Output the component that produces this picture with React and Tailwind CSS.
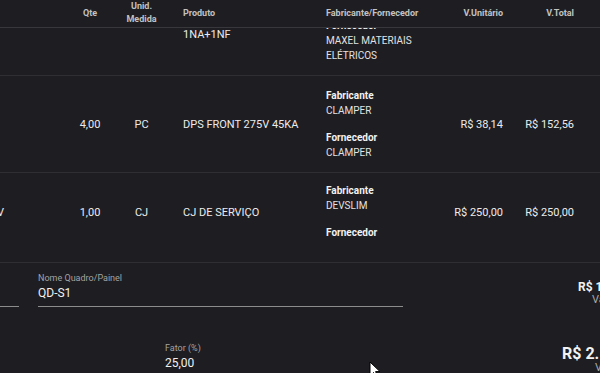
const cols = "grid grid-cols-[60px_60px_43px_163px_114px_63px_71px_26px]";

const Supplier = ({ label, lines }) => (
  <div>
    <p className="font-bold text-[10px] leading-[15px] text-[#f2f2f2]">{label}</p>
    {lines.map((l) => (
      <p key={l} className="text-[10px] leading-[15px] text-[#e2e2e2]">{l}</p>
    ))}
  </div>
);

const App = () => {
  return (
    <div
      className="relative w-[600px] h-[373px] overflow-hidden bg-[#1e1d21] text-[#ececec]"
      style={{ fontFamily: "Roboto, 'Liberation Sans', sans-serif" }}
    >
      {/* cabeçalho */}
      <div className={`${cols} h-[28px] pb-[8px] items-center border-b border-[#38373b] text-[9px] leading-[13px] font-bold text-[#c2c2c2]`}>
        <div />
        <div className="text-center">Qte</div>
        <div className="text-center">Unid.<br />Medida</div>
        <div className="pl-[20px]">Produto</div>
        <div>Fabricante/Fornecedor</div>
        <div className="text-right">V.Unitário</div>
        <div className="text-right">V.Total</div>
        <div />
      </div>

      {/* linhas */}
      <div className="overflow-hidden text-[11px] leading-[15px]">
        <div className={`${cols} -mt-[16px] border-b border-[#2f2e32]`}>
          <div />
          <div />
          <div />
          <div className="pl-[20px] pt-[15px]">1NA+1NF</div>
          <div className="pt-[6px] pb-[12px]">
            <Supplier label="Fornecedor" lines={["MAXEL MATERIAIS", "ELÉTRICOS"]} />
          </div>
          <div />
          <div />
          <div />
        </div>

        <div className={`${cols} items-center border-b border-[#2f2e32]`}>
          <div />
          <div className="text-center">4,00</div>
          <div className="text-center">PC</div>
          <div className="pl-[20px]">DPS FRONT 275V 45KA</div>
          <div className="pt-[12px] pb-[12px]">
            <Supplier label="Fabricante" lines={["CLAMPER"]} />
            <div className="mt-[12px]">
              <Supplier label="Fornecedor" lines={["CLAMPER"]} />
            </div>
          </div>
          <div className="text-right">R$ 38,14</div>
          <div className="text-right">R$ 152,56</div>
          <div />
        </div>

        <div className={`${cols} items-center border-b border-[#2f2e32]`}>
          <div className="pb-[11px] flex justify-start">
            <span className="-ml-[3px] whitespace-nowrap">V</span>
          </div>
          <div className="text-center pb-[11px]">1,00</div>
          <div className="text-center pb-[11px]">CJ</div>
          <div className="pl-[20px] pb-[11px]">CJ DE SERVIÇO</div>
          <div className="pt-[10px] pb-[22px]">
            <Supplier label="Fabricante" lines={["DEVSLIM"]} />
            <div className="mt-[12px]">
              <Supplier label="Fornecedor" lines={[]} />
            </div>
          </div>
          <div className="text-right pb-[11px]">R$ 250,00</div>
          <div className="text-right pb-[11px]">R$ 250,00</div>
          <div />
        </div>
      </div>

      {/* rodapé */}
      <div className="flex items-start">
        <div className="w-[19px] h-[44px] border-b border-[#8c8c8c] shrink-0" />
        <div className="ml-[19px] w-[365px] shrink-0 pt-[9px] pb-[4px] border-b border-[#8c8c8c]">
          <p className="text-[9px] leading-[12px] text-[#a3a3a3]">Nome Quadro/Painel</p>
          <p className="text-[12px] leading-[18px] text-[#f0f0f0]">QD-S1</p>
        </div>
        <div className="ml-[175px] shrink-0 pt-[17px] whitespace-nowrap">
          <p className="text-[12px] leading-[14px] font-bold text-[#f2f2f2]">R$ 1.219,36</p>
          <p className="pl-[14px] text-[11px] leading-[12px] text-[#a8a8a8]">Valor Total</p>
        </div>
      </div>

      <div className="flex items-start">
        <div className="ml-[165px] w-[200px] shrink-0 pt-[35px]">
          <p className="text-[9px] leading-[12px] text-[#a3a3a3]">Fator (%)</p>
          <p className="text-[12px] leading-[18px] text-[#f0f0f0]">25,00</p>
        </div>
        <div className="ml-[197px] shrink-0 pt-[39px] whitespace-nowrap">
          <p className="text-[16px] leading-[16px] font-bold text-[#f2f2f2]">R$ 2.149,20</p>
          <p className="pl-[33px] text-[11px] leading-[12px] text-[#a8a8a8]">Valor Final</p>
        </div>
      </div>

      {/* cursor do mouse */}
      <svg className="absolute left-[369px] top-[361px]" width="12" height="18" viewBox="0 0 12 18">
        <path d="M1 1 L1 15 L4.5 11.5 L7 17 L9 16 L6.6 10.6 L11 10.6 Z" fill="#ffffff" stroke="#000000" strokeWidth="1" strokeLinejoin="round" />
      </svg>
    </div>
  );
};

export default App;
